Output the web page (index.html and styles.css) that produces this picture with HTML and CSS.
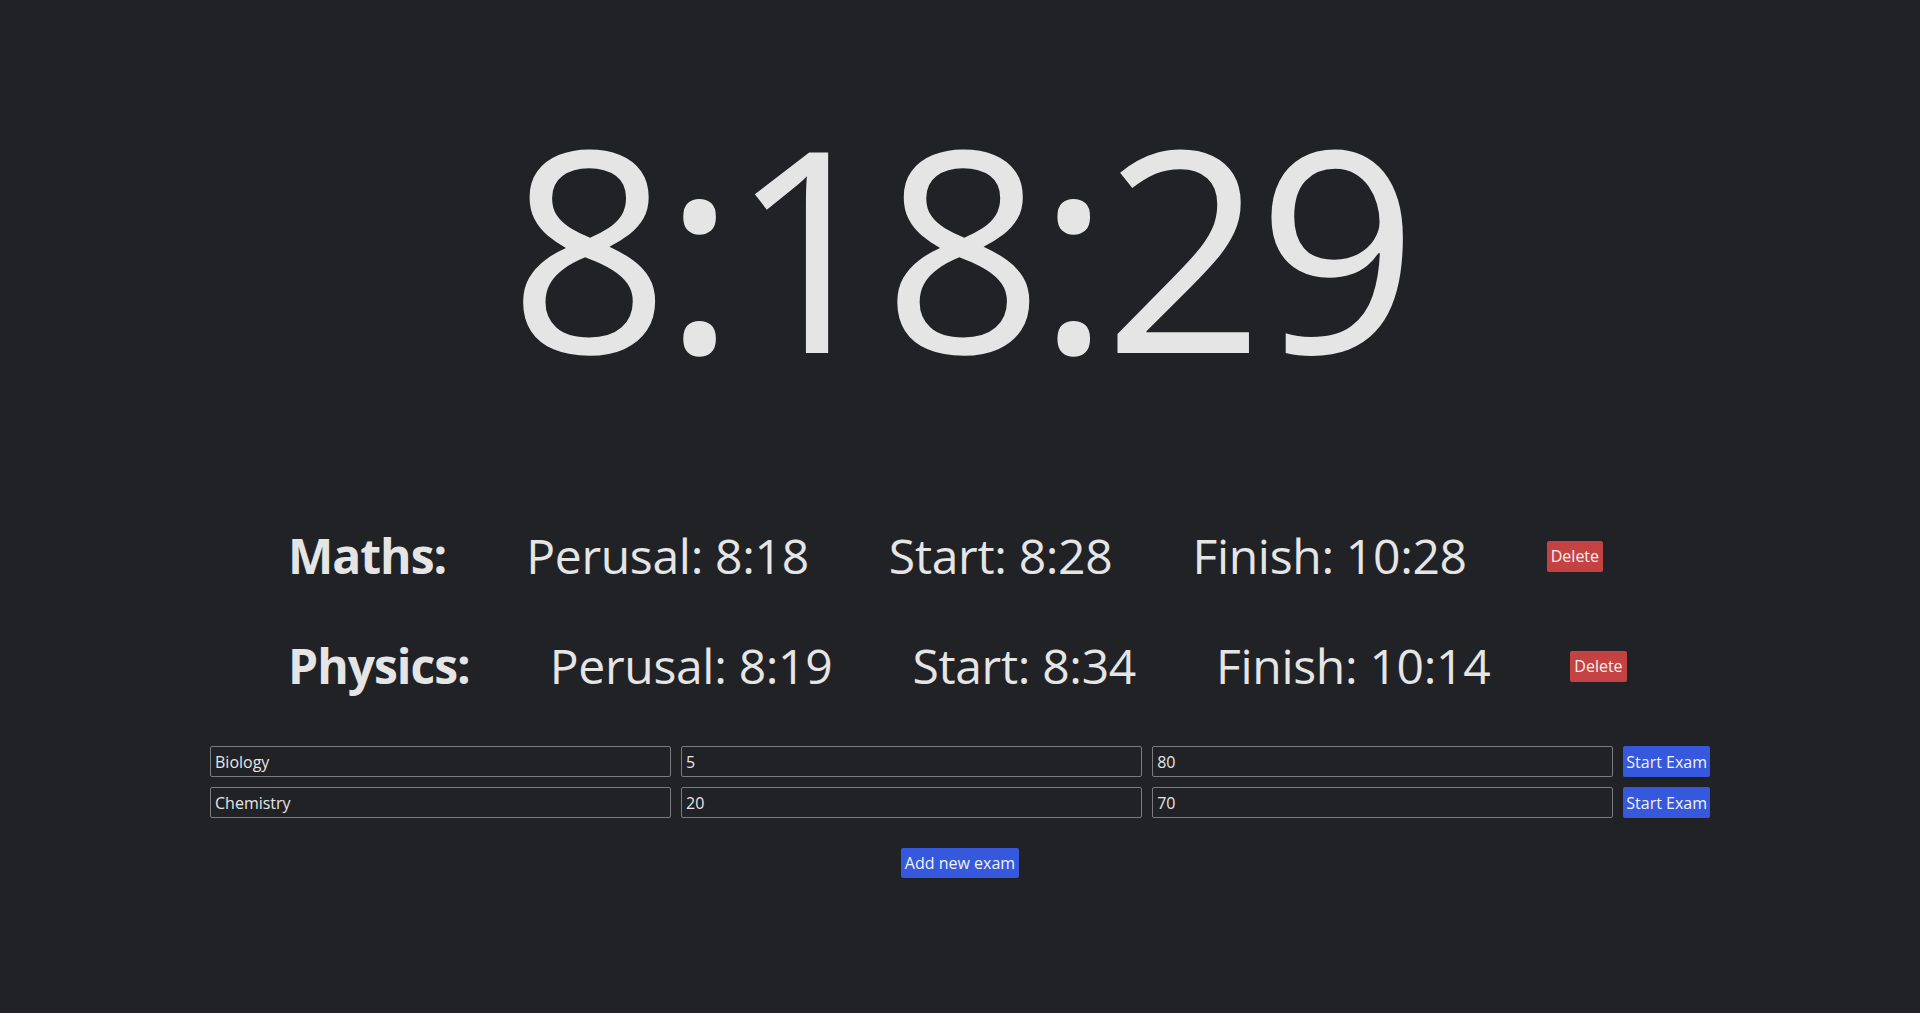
FILE: index.html
```html
<!DOCTYPE html>
<html lang="en">
<head>
<meta charset="utf-8">
<title>Exam Clock</title>
<link rel="stylesheet" href="styles.css">
</head>
<body>
<main class="app">
  <div class="clock">8:18:29</div>
  <section class="exams">
    <div class="exam">
      <span class="exam-name">Maths:</span>
      <span class="exam-time">Perusal: 8:18</span>
      <span class="exam-time">Start: 8:28</span>
      <span class="exam-time">Finish: 10:28</span>
      <button class="btn btn-delete">Delete</button>
    </div>
    <div class="exam">
      <span class="exam-name">Physics:</span>
      <span class="exam-time">Perusal: 8:19</span>
      <span class="exam-time">Start: 8:34</span>
      <span class="exam-time">Finish: 10:14</span>
      <button class="btn btn-delete">Delete</button>
    </div>
  </section>
  <section class="form">
    <div class="form-row">
      <input class="field" type="text" value="Biology">
      <input class="field" type="text" value="5">
      <input class="field" type="text" value="80">
      <button class="btn btn-start">Start Exam</button>
    </div>
    <div class="form-row">
      <input class="field" type="text" value="Chemistry">
      <input class="field" type="text" value="20">
      <input class="field" type="text" value="70">
      <button class="btn btn-start">Start Exam</button>
    </div>
  </section>
  <div class="add-wrap">
    <button class="btn btn-add">Add new exam</button>
  </div>
</main>
</body>
</html>
```

FILE: styles.css
```css
html, body {
  margin: 0;
  padding: 0;
  background: #212226;
  color: #e5e5e5;
  font-family: "Open Sans", "Noto Sans", sans-serif;
}

.app {
  min-height: 1013px;
  display: flex;
  flex-direction: column;
}

.clock {
  font-size: 281px;
  font-weight: 380;
  line-height: 1;
  text-align: center;
  padding-top: 104px;
  letter-spacing: -7px;
}

.exams {
  margin-top: 116px;
  padding-left: 288px;
}

.exam {
  height: 110px;
  display: flex;
  align-items: center;
  gap: 80px;
  font-size: 48px;
  line-height: 1.2;
}

.exam-name {
  font-weight: 700;
  letter-spacing: -1px;
}

.exam-time {
  letter-spacing: -0.3px;
}

.form {
  width: 1500px;
  margin: 25px auto 0;
  display: flex;
  flex-direction: column;
  gap: 10px;
}

.form-row {
  display: flex;
  gap: 10px;
}

.field {
  flex: 1;
  min-width: 0;
  height: 31px;
  box-sizing: border-box;
  background: transparent;
  border: 1px solid #7c7c7c;
  border-radius: 2px;
  color: #e5e5e5;
  font-family: inherit;
  font-size: 16px;
  padding: 0 4px;
}

.btn {
  font-family: inherit;
  font-size: 16px;
  color: #f2f2f2;
  border: none;
  border-radius: 2px;
  padding: 0 4px;
  height: 31px;
  white-space: nowrap;
  cursor: pointer;
}

.btn-delete {
  background: #c44242;
}

.btn-start {
  background: #3558dc;
  flex: none;
  padding: 0 3px;
}

.add-wrap {
  margin-top: 30px;
  display: flex;
  justify-content: center;
}

.btn-add {
  background: #3558dc;
  height: 30px;
}
```
